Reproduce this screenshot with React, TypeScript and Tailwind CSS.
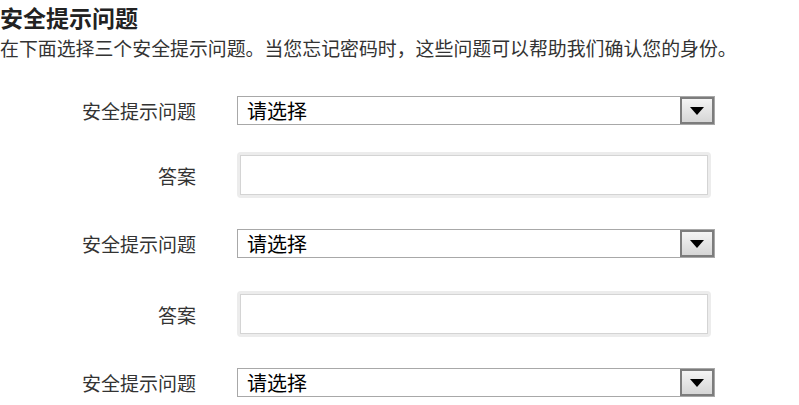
import { useState } from 'react';

const font = "font-['SimSun','Noto_Sans_CJK_SC',sans-serif]";

function QuestionRow() {
  const [value, setValue] = useState('');
  return (
    <div className="flex items-center h-[29px]">
      <label className="w-[196px] text-right text-[19px] leading-none text-[#333]">安全提示问题</label>
      <div className="ml-[41px] relative w-[478px] h-[29px] border border-[#a8a8a8] bg-white flex items-center">
        <select
          value={value}
          onChange={e => setValue(e.target.value)}
          className="appearance-none w-full h-full bg-transparent pl-[9px] text-[20px] leading-none text-black outline-none"
        >
          <option value="">请选择</option>
        </select>
        <div className="pointer-events-none absolute right-0 top-0 w-[34px] h-[27px] border-2 border-[#7c7c7c] bg-gradient-to-b from-[#f4f4f4] to-[#d6d6d6] flex items-center justify-center">
          <svg width="14" height="8" viewBox="0 0 14 8">
            <path d="M0 0 L14 0 L7 8 Z" fill="#000" />
          </svg>
        </div>
      </div>
    </div>
  );
}

function AnswerRow() {
  return (
    <div className="flex items-center h-[46px]">
      <label className="w-[196px] text-right text-[19px] leading-none text-[#333]">答案</label>
      <div className="ml-[41px] w-[474px] h-[46px] rounded-[4px] bg-[#ececec] p-[3px]">
        <input className="w-full h-full border border-[#d4d4d4] bg-white outline-none px-2 text-[18px]" />
      </div>
    </div>
  );
}

export default function App() {
  return (
    <div className={`w-[799px] h-[405px] bg-white overflow-hidden ${font}`}>
      <h2 className="pt-[6px] text-[23px] leading-[23px] font-bold text-[#222]">安全提示问题</h2>
      <p className="mt-[9px] text-[18.9px] leading-[19px] text-[#333] whitespace-nowrap">
        在下面选择三个安全提示问题。当您忘记密码时，这些问题可以帮助我们确认您的身份。
      </p>
      <div className="mt-[39px]">
        <QuestionRow />
      </div>
      <div className="mt-[27px]">
        <AnswerRow />
      </div>
      <div className="mt-[31px]">
        <QuestionRow />
      </div>
      <div className="mt-[33px]">
        <AnswerRow />
      </div>
      <div className="mt-[31px]">
        <QuestionRow />
      </div>
    </div>
  );
}
